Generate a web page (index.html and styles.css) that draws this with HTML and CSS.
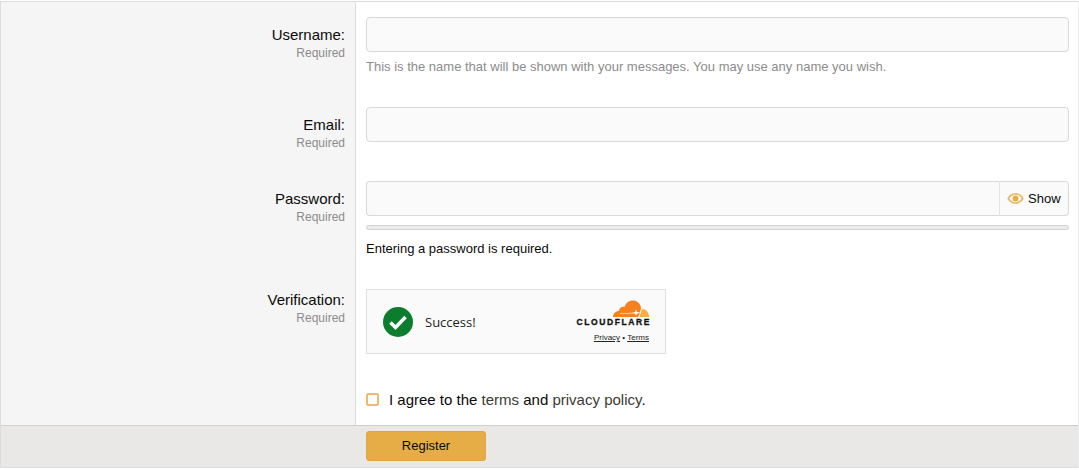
FILE: index.html
```html
<!DOCTYPE html>
<html lang="en">
<head>
  <meta charset="UTF-8" />
  <meta name="viewport" content="width=device-width, initial-scale=1.0"/>
  <title>Register</title>
  <link rel="stylesheet" href="styles.css">
</head>
<body>
  <form class="block">
    <div class="row row-explained">
      <div class="label-col">
        <label>Username:</label>
        <span class="hint">Required</span>
      </div>
      <div class="field-col">
        <input class="input" type="text" />
        <div class="explain">This is the name that will be shown with your messages. You may use any name you wish.</div>
      </div>
    </div>

    <div class="row">
      <div class="label-col">
        <label>Email:</label>
        <span class="hint">Required</span>
      </div>
      <div class="field-col">
        <input class="input" type="text" />
      </div>
    </div>

    <div class="row row-password">
      <div class="label-col">
        <label>Password:</label>
        <span class="hint">Required</span>
      </div>
      <div class="field-col">
        <div class="input-group">
          <input class="input" type="password" />
          <div class="show-toggle">
            <svg class="eye" viewBox="0 0 18 12" width="17" height="11">
              <path fill-rule="evenodd" fill-opacity=".8" d="M9 0C5 0 1.800 2.400 0 6c1.800 3.600 5 6 9 6s7.200-2.400 9-6c-1.800-3.600-5-6-9-6zM9 2c2.700 0 5 1.500 6.600 4-1.600 2.500-3.900 4-6.600 4S4 8.500 2.400 6C4 3.500 6.300 2 9 2z"/>
              <circle cx="9" cy="6" r="3.200"/>
            </svg>
            <span>Show</span>
          </div>
        </div>
        <div class="meter"></div>
        <div class="meter-text">Entering a password is required.</div>
      </div>
    </div>

    <div class="row row-captcha">
      <div class="label-col">
        <label>Verification:</label>
        <span class="hint">Required</span>
      </div>
      <div class="field-col">
        <div class="captcha">
          <svg class="check" viewBox="0 0 30 30" width="30" height="30">
            <circle cx="15" cy="15" r="15" fill="#0b7d2c"/>
            <path d="M7.500 15.500l5 5L22.500 10" fill="none" stroke="#fff" stroke-width="3.500"/>
          </svg>
          <span class="captcha-text">Success!</span>
          <div class="cf">
            <svg class="cloud" viewBox="0 0 36 17" width="36" height="17">
              <path fill="#f6821f" d="M0 17C0 13.500 3 11 6 11 6 8 9 6 11.500 7 13 2 17 0 21 .5 25 1 28 4.500 28 8.500L26.500 14 25 17z"/>
              <path fill="#fbad41" d="M26.500 17L29 9C33 8.500 36 12.500 36 17z"/>
              <path fill="#fff" d="M7 13.200L27 12.400 27 13.200 7 13.800z"/>
              <path fill="#fff" d="M23 9.500l.8 2.500 2.500.8-2.500.8-.8 2.500-.8-2.500-2.500-.8 2.500-.8z"/>
            </svg>
            <div class="cf-name">CLOUDFLARE</div>
            <div class="cf-links"><a href="#">Privacy</a> • <a href="#">Terms</a></div>
          </div>
        </div>
      </div>
    </div>

    <div class="row row-agree">
      <div class="label-col"></div>
      <div class="field-col">
        <label class="agree">
          <span class="checkbox"></span>
          <span>I agree to the <a href="#">terms</a> and <a href="#">privacy policy</a>.</span>
        </label>
      </div>
    </div>

    <div class="footer">
      <button class="btn-primary" type="button">Register</button>
    </div>
  </form>
</body>
</html>
```

FILE: styles.css
```css
* {
  margin: 0;
  padding: 0;
  box-sizing: border-box;
  font-family: 'Liberation Sans', Arial, sans-serif;
}

body {
  background: #fff;
  color: #0a0a0a;
  padding-top: 1px;
}

.block {
  height: 467px;
  display: flex;
  flex-direction: column;
  border: 1px solid #dcdcdc;
  border-right-color: #eeeeee;
}

.row {
  display: flex;
}

.row-agree {
  flex: 1;
}

.label-col {
  flex: 0 0 355px;
  padding: 15px 10px 0 0;
  background: #f5f5f5;
  border-right: 1px solid #dcdcdc;
  text-align: right;
}

.label-col label {
  display: block;
  padding-top: 9px;
  font-size: 15px;
  line-height: 17px;
}

.hint {
  display: block;
  margin-top: 2px;
  font-size: 12px;
  line-height: 17px;
  color: #8c8c8c;
}

.field-col {
  flex: 1;
  padding: 15px 9px 24px 10px;
}

.row-explained .field-col {
  padding-bottom: 17px;
}

.input {
  display: block;
  width: 100%;
  height: 35px;
  background: #fafafa;
  border: 1px solid #d8d8d8;
  border-radius: 4px;
}

.explain {
  margin-top: 6px;
  font-size: 13px;
  line-height: 17px;
  color: #8c8c8c;
}

.input-group {
  display: flex;
}

.input-group .input {
  flex: 1;
  border-radius: 4px 0 0 4px;
  border-right: none;
}

.show-toggle {
  display: flex;
  flex: 0 0 70px;
  align-items: center;
  gap: 4px;
  padding-left: 7px;
  height: 35px;
  background: #fafafa;
  border: 1px solid #d8d8d8;
  border-left-color: #e4e4e4;
  border-radius: 0 4px 4px 0;
  font-size: 13px;
}

.eye {
  fill: #e6ad46;
}

.meter {
  height: 5px;
  margin-top: 9px;
  background: #ececec;
  border: 1px solid #d0d0d0;
  border-radius: 3px;
}

.meter-text {
  margin-top: 10px;
  font-size: 13px;
  line-height: 17px;
}

.row-password .field-col {
  padding-bottom: 17px;
}

.row-captcha .label-col {
  padding-top: 8px;
}

.captcha {
  display: flex;
  align-items: center;
  width: 300px;
  height: 65px;
  padding: 0 16px;
  background: #fafafa;
  border: 1px solid #e0e0e0;
}

.captcha-text {
  margin-left: 12px;
  font-family: 'Open Sans', sans-serif;
  font-size: 13px;
  color: #232323;
}

.cf {
  margin-left: auto;
  display: flex;
  flex-direction: column;
  align-items: flex-end;
}

.cloud {
  display: block;
}

.cf-name {
  margin-top: 1px;
  margin-right: -2px;
  font-size: 8.500px;
  line-height: 9px;
  font-weight: bold;
  letter-spacing: 1.600px;
  color: #111;
  -webkit-text-stroke: 0.3px #111;
}

.cf-links {
  margin-top: 6px;
  font-size: 8px;
  line-height: 10px;
  color: #232323;
}

.cf-links a {
  color: #232323;
}

.row-captcha .field-col {
  padding-bottom: 0;
}

.row-agree .field-col {
  padding: 37px 9px 0 10px;
}

.agree {
  display: flex;
  align-items: center;
  gap: 10px;
  font-size: 15px;
  line-height: 17px;
}

.agree a {
  color: #3b3b34;
  text-decoration: none;
}

.checkbox {
  width: 13px;
  height: 13px;
  background: #fff;
  border: 2px solid #ecbb6c;
  border-radius: 2px;
}

.footer {
  height: 42px;
  padding: 5px 0 0 365px;
  background: #e9e8e6;
  border-top: 1px solid #cfcfcf;
}

.btn-primary {
  display: block;
  width: 120px;
  height: 30px;
  padding-bottom: 2px;
  background: #e6ad46;
  border: 1px solid #dfa63f;
  border-radius: 3px;
  color: #0a0a0a;
  font-size: 13px;
}
```
